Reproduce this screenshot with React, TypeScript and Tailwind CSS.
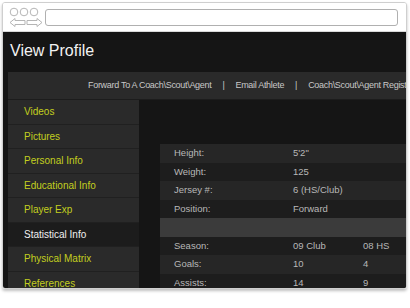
import React from "react";

const menu = [
  "Videos",
  "Pictures",
  "Personal Info",
  "Educational Info",
  "Player Exp",
  "Statistical Info",
  "Physical Matrix",
  "References",
];

const infoRows = [
  ["Height:", "5'2\"", ""],
  ["Weight:", "125", ""],
  ["Jersey #:", "6 (HS/Club)", ""],
  ["Position:", "Forward", ""],
];

const statRows = [
  ["Season:", "09 Club", "08 HS"],
  ["Goals:", "10", "4"],
  ["Assists:", "14", "9"],
];

function Row({ cells, light }: { cells: string[]; light: boolean }) {
  return (
    <div className={`flex h-[18.5px] items-center ${light ? "bg-[#262626]" : "bg-[#1d1d1d]"}`}>
      <span className="w-[133px] pl-[14px]">{cells[0]}</span>
      <span className="w-[70px]">{cells[1]}</span>
      <span>{cells[2]}</span>
    </div>
  );
}

export default function App() {
  return (
    <div className="w-[410px] h-[308px] bg-white pt-[2px] pl-[2px]" style={{ fontFamily: '"Liberation Sans", Arial, sans-serif' }}>
      <div className="w-[405px] h-[287px] rounded-[3px] border border-[#cfcfcf] overflow-hidden flex flex-col shadow-[0_2px_3px_rgba(0,0,0,0.25)]">
        {/* Browser chrome */}
        <div className="h-[29px] bg-white flex items-center shrink-0 border-b border-[#d8d8d8]">
          <div className="w-[42px] pl-[6px] pt-[1px]">
            <svg width="36" height="22" viewBox="0 0 36 22" fill="none" stroke="#b5b5b5" strokeWidth="1">
              <circle cx="5" cy="5" r="3.8" />
              <circle cx="15" cy="5" r="3.8" />
              <circle cx="25" cy="5" r="3.8" />
              <path d="M1 15.5 L6 11.5 L6 13.5 L16 13.5 L16 17.5 L6 17.5 L6 19.5 Z" />
              <path d="M33 15.5 L28 11.5 L28 13.5 L18 13.5 L18 17.5 L28 17.5 L28 19.5 Z" />
            </svg>
          </div>
          <div className="w-[353px] h-[17px] rounded-[3px] border border-[#b0b0b0]" />
        </div>

        {/* Dark page */}
        <div className="flex-1 bg-[#151515] flex flex-col min-h-0">
          <div className="h-[40px] shrink-0 pl-[7px] pt-[7px] text-[16px] text-[#f2f2f2]">View Profile</div>
          <div className="flex-1 flex flex-col ml-[5px] min-h-0">
            <div className="h-[28px] shrink-0 bg-[#2a2a2a] flex items-center pl-[80px] text-[9px] tracking-[-0.3px] text-[#c8c8c8] whitespace-nowrap overflow-hidden border-b border-[#1c1c1c]">
              <span>Forward To A Coach\Scout\Agent</span>
              <span className="px-[11px]">|</span>
              <span>Email Athlete</span>
              <span className="px-[11px]">|</span>
              <span>Coach\Scout\Agent Registration</span>
            </div>
            <div className="flex-1 flex min-h-0">
              <div className="w-[131px] shrink-0 bg-[#2a2a2a] flex flex-col">
                {menu.map((m) => {
                  const active = m === "Statistical Info";
                  return (
                    <div
                      key={m}
                      className={`h-[24.5px] shrink-0 flex items-center pl-[16px] text-[10px] border-b border-[#202020] ${
                        active ? "bg-[#1c1c1c] text-[#f0f0f0]" : "text-[#c3cf1f]"
                      }`}
                    >
                      {m}
                    </div>
                  );
                })}
              </div>
              <div className="flex-1 pl-[21px] pt-[44px] text-[9.5px] text-[#b8b8b8] whitespace-nowrap overflow-hidden">
                {infoRows.map((r, i) => (
                  <Row key={r[0]} cells={r} light={i % 2 === 0} />
                ))}
                <div className="h-[18.5px] bg-[#3b3b3b]" />
                {statRows.map((r, i) => (
                  <Row key={r[0]} cells={r} light={i % 2 === 1} />
                ))}
              </div>
            </div>
          </div>
        </div>
      </div>
    </div>
  );
}
